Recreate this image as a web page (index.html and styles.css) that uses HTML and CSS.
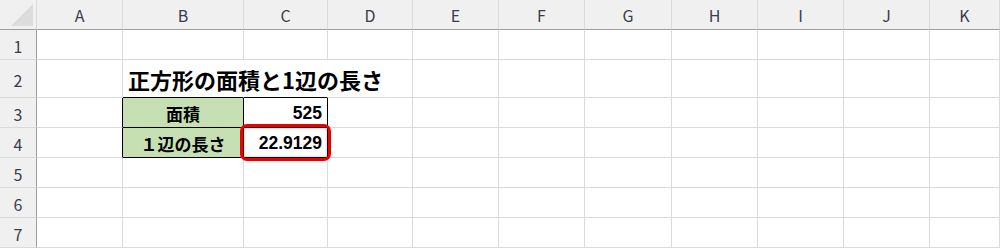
FILE: index.html
```html
<!DOCTYPE html>
<html lang="ja">
<head>
<meta charset="utf-8">
<link rel="stylesheet" href="styles.css">
</head>
<body>
<div class="sheet">
  <div class="hd corner"><span class="tri"></span></div>
  <div class="hd col">A</div><div class="hd col">B</div><div class="hd col">C</div><div class="hd col">D</div><div class="hd col">E</div><div class="hd col">F</div><div class="hd col">G</div><div class="hd col">H</div><div class="hd col">I</div><div class="hd col">J</div><div class="hd col">K</div>

  <div class="hd row">1</div>
  <div class="c"></div><div class="c"></div><div class="c"></div><div class="c"></div><div class="c"></div><div class="c"></div><div class="c"></div><div class="c"></div><div class="c"></div><div class="c"></div><div class="c"></div>

  <div class="hd row">2</div>
  <div class="c"></div><div class="c title nor kb">正方形の面積と1辺の長さ</div><div class="c nor kb"></div><div class="c"></div><div class="c"></div><div class="c"></div><div class="c"></div><div class="c"></div><div class="c"></div><div class="c"></div><div class="c"></div>

  <div class="hd row">3</div>
  <div class="c kr"></div><div class="c lbl kr kb">面積</div><div class="c num kr kb">525</div><div class="c"></div><div class="c"></div><div class="c"></div><div class="c"></div><div class="c"></div><div class="c"></div><div class="c"></div><div class="c"></div>

  <div class="hd row">4</div>
  <div class="c kr"></div><div class="c lbl kr kb">１辺の長さ</div><div class="c num kr kb hl">22.9129<span class="mark"></span></div><div class="c"></div><div class="c"></div><div class="c"></div><div class="c"></div><div class="c"></div><div class="c"></div><div class="c"></div><div class="c"></div>

  <div class="hd row">5</div>
  <div class="c"></div><div class="c"></div><div class="c"></div><div class="c"></div><div class="c"></div><div class="c"></div><div class="c"></div><div class="c"></div><div class="c"></div><div class="c"></div><div class="c"></div>

  <div class="hd row">6</div>
  <div class="c"></div><div class="c"></div><div class="c"></div><div class="c"></div><div class="c"></div><div class="c"></div><div class="c"></div><div class="c"></div><div class="c"></div><div class="c"></div><div class="c"></div>

  <div class="hd row">7</div>
  <div class="c"></div><div class="c"></div><div class="c"></div><div class="c"></div><div class="c"></div><div class="c"></div><div class="c"></div><div class="c"></div><div class="c"></div><div class="c"></div><div class="c"></div>
</div>
</body>
</html>
```
FILE: styles.css
```css
html, body {
  margin: 0;
  padding: 0;
  background: #ffffff;
  overflow: hidden;
}

.sheet {
  display: grid;
  grid-template-columns: 37px 86px 121px 84px 85px 86px 86px 87px 86px 86px 86px 70px;
  grid-template-rows: 30px 30px 38px 30px 30px 30px 30px 30px;
  width: 1000px;
  font-family: "Noto Sans CJK JP", "Noto Sans", sans-serif;
}

.sheet > div {
  box-sizing: border-box;
  border-right: 1px solid #dadada;
  border-bottom: 1px solid #dadada;
}

.hd {
  background: #f0f0f0;
  color: #3c3c4a;
  font-size: 16px;
  display: flex;
  align-items: center;
  justify-content: center;
}

.hd.col {
  border-bottom: 1px solid #9e9e9e;
  padding-top: 1px;
}

.hd.row {
  border-right: 1px solid #9e9e9e;
  padding-top: 2px;
}

.hd.corner {
  border-bottom: 1px solid #9e9e9e;
  border-right: 1px solid #dadada;
  position: relative;
}

.tri {
  position: absolute;
  right: 3px;
  bottom: 3px;
  width: 0;
  height: 0;
  border-left: 22px solid transparent;
  border-bottom: 22px solid #dcdcdc;
}

.c {
  display: flex;
  align-items: center;
  font-size: 17px;
  font-weight: 700;
  color: #000;
  white-space: nowrap;
}

.title {
  font-size: 22px;
  padding-left: 5px;
  align-items: flex-end;
  padding-bottom: 2px;
  overflow: visible;
  position: relative;
  z-index: 2;
}

.nor { border-right: 1px solid transparent !important; }
.kr { border-right: 1px solid #000 !important; }
.kb { border-bottom: 1px solid #000 !important; }

.lbl {
  background: #c6e0b4;
  justify-content: center;
  padding-top: 1px;
}

.num {
  justify-content: flex-end;
  padding-right: 5px;
  font-size: 17.5px;
  font-family: "Liberation Sans", "Noto Sans", sans-serif;
  padding-top: 1px;
}

.hl {
  position: relative;
}

.mark {
  position: absolute;
  left: -4px;
  top: -4px;
  right: -4px;
  bottom: -4px;
  border: 3px solid #ee0000;
  border-radius: 7px;
  box-shadow: inset 0 0 3px 1px rgba(0, 0, 0, 0.28);
}
```
